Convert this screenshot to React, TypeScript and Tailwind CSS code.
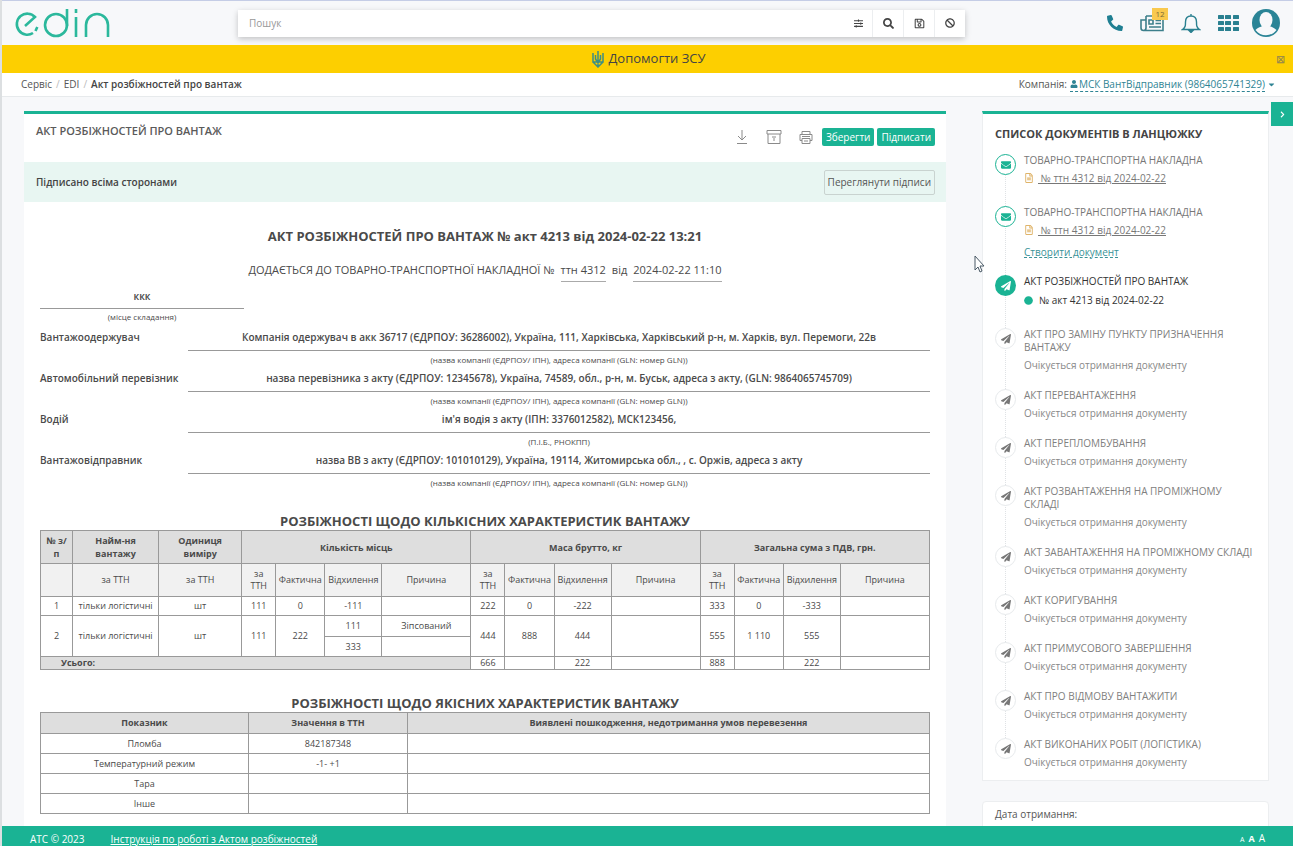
import { useState } from "react"
import type { ReactNode } from "react"
import {
  FaPaperPlane, FaEnvelope, FaPhone, FaSearch, FaRegSave, FaBan, FaSlidersH, FaUser, FaCaretDown,
  FaChevronRight, FaCircle, FaRegFileAlt,
} from "react-icons/fa"

const hint = "(назва компанії (ЄДРПОУ/ ІПН), адреса компанії (GLN: номер GLN))"

const parties = [
  { label: "Вантажоодержувач", value: "Компанія одержувач в акк 36717 (ЄДРПОУ: 36286002), Україна, 111, Харківська, Харківський р-н, м. Харків, вул. Перемоги, 22в", hint },
  { label: "Автомобільний перевізник", value: "назва перевізника з акту (ЄДРПОУ: 12345678), Україна, 74589, обл., р-н, м. Буськ, адреса з акту, (GLN: 9864065745709)", hint },
  { label: "Водій", value: "ім'я водія з акту (ІПН: 3376012582), МСК123456,", hint: "(П.І.Б., РНОКПП)" },
  { label: "Вантажовідправник", value: "назва ВВ з акту (ЄДРПОУ: 101010129), Україна, 19114, Житомирська обл., , с. Оржів, адреса з акту", hint },
]

const waiting = [
  "АКТ ПРО ЗАМІНУ ПУНКТУ ПРИЗНАЧЕННЯ ВАНТАЖУ",
  "АКТ ПЕРЕВАНТАЖЕННЯ",
  "АКТ ПЕРЕПЛОМБУВАННЯ",
  "АКТ РОЗВАНТАЖЕННЯ НА ПРОМІЖНОМУ СКЛАДІ",
  "АКТ ЗАВАНТАЖЕННЯ НА ПРОМІЖНОМУ СКЛАДІ",
  "АКТ КОРИГУВАННЯ",
  "АКТ ПРИМУСОВОГО ЗАВЕРШЕННЯ",
  "АКТ ПРО ВІДМОВУ ВАНТАЖИТИ",
  "АКТ ВИКОНАНИХ РОБІТ (ЛОГІСТИКА)",
]

function Logo() {
  return (
    <svg viewBox="0 0 96 32" className="h-8 w-24" fill="none" stroke="#2bb89c" strokeWidth="2.6" aria-label="edin">
      <path d="M11 19 21 10A10.500 10.500 0 1 0 19 26M21.500 24l1.800-4" />
      <circle cx="42" cy="18" r="11" />
      <path d="M53 2v17M62 2v4M62 10v20M72 30V18a11 11 0 0 1 22 0v12" />
    </svg>
  )
}

function Trident() {
  return (
    <svg viewBox="0 0 12 17" className="h-[17px] w-3" fill="none" stroke="#3c8f84" strokeWidth="1.500">
      <path d="M1 2v9h10V2M6 0v16M1 11l5 5 5-5M3.500 4v4l2.500 4 2.500-4V4" />
    </svg>
  )
}

function Header() {
  const [query, setQuery] = useState("")
  const tool = "flex h-[27px] w-[31px] items-center justify-center border-l border-[#eceef0]"

  return (
    <header className="flex h-[45px] shrink-0 items-center border-t border-[#c5cde6] bg-[#f7f8fa] pl-3 pr-3">
      <a href="#" className="w-56 shrink-0"><Logo /></a>
      <div className="flex h-[27px] w-[727px] items-center bg-white text-[#444] shadow-[0_2px_6px_rgba(0,0,0,0.22)]">
        <input
          aria-label="Пошук"
          placeholder="Пошук"
          value={query}
          onChange={(e) => setQuery(e.target.value)}
          className="h-full min-w-0 flex-1 px-[11px] text-[10px] outline-none placeholder:text-[#999]"
        />
        <button aria-label="Фільтри" className="flex h-[27px] w-[27px] items-center justify-center"><FaSlidersH size={9} /></button>
        <button aria-label="Шукати" className={tool}><FaSearch size={11} /></button>
        <button aria-label="Зберегти пошук" className={tool}><FaRegSave size={11} /></button>
        <button aria-label="Очистити" className={tool}><FaBan size={10} /></button>
      </div>
      <div className="ml-auto flex items-center text-[#1f7f92]">
        <button aria-label="Телефон"><FaPhone size={16} className="-scale-x-100" /></button>
        <button aria-label="Новини" className="relative ml-[17px]">
          <svg viewBox="0 0 26 20" className="h-5 w-[26px]" fill="none" stroke="#3c7f8b" strokeWidth="1.600">
            <path d="M6 3h17v14.500H3.500a2.500 2.500 0 0 1-2.500-2.500V7h5M6 3v12a2.500 2.500 0 0 1-2.500 2.500M9 7h4v4H9zM15.500 7.500H21M15.500 10.500H21M9 14h12" />
          </svg>
          <span className="absolute -right-0.5 -top-[5px] h-3 w-4 bg-[#f9c94e] text-center text-[8px] leading-3 text-[#7a6a3c]">12</span>
        </button>
        <button aria-label="Сповіщення" className="ml-[15px]">
          <svg viewBox="0 0 20 20" className="size-5" fill="none" stroke="#2a8090" strokeWidth="1.400">
            <path d="M10 1v2M1.500 16.500c3-2 3-4 3-7.500 0-4 2-6 5.500-6s5.500 2 5.500 6c0 3.500 0 5.500 3 7.500z" />
            <path d="M8 17.500h4l-2 2z" fill="#2a8090" />
          </svg>
        </button>
        <button aria-label="Сервіси" className="ml-[17px]">
          <svg viewBox="0 0 21 16" className="h-4 w-[21px]" fill="#2a8090">
            {[0, 6, 12].map((y) => [0, 7, 15].map((x) => <rect key={`${x}-${y}`} x={x} y={y} width="6" height="4" rx="0.5" />))}
          </svg>
        </button>
        <button aria-label="Профіль" className="ml-3">
          <svg viewBox="0 0 30 30" className="size-[30px]">
            <circle cx="15" cy="15" r="14" fill="#2a8496" />
            <path d="M4.500 22c3-3 5-3 7-4h7c2 1 4 1 7 4-5 7-16 7-21 0Z" fill="#f7f8fa" />
            <ellipse cx="15" cy="12" rx="6.500" ry="8" fill="#f7f8fa" />
          </svg>
        </button>
      </div>
    </header>
  )
}

function Toolbar() {
  const action = "h-[18px] rounded-xs bg-[#1ab394] px-1 text-[10px] leading-4 text-white"
  return (
    <div className="flex items-center pb-0.5 text-[#8a8a8a]">
      <button aria-label="Завантажити">
        <svg viewBox="0 0 12 16" className="h-4 w-3" fill="none" stroke="currentColor"><path d="M6 1v10M2 7l4 4 4-4M1 14.500h10" /></svg>
      </button>
      <button aria-label="Архівувати" className="ml-[18px]">
        <svg viewBox="0 0 16 16" className="size-4" fill="none" stroke="currentColor">
          <path d="M1 1.500h14v3.500H1zM2 5v9.500h12V5M6 8h4M8 9v3" />
        </svg>
      </button>
      <button aria-label="Друк" className="ml-[17px]">
        <svg viewBox="0 0 14 16" className="h-4 w-[14px]" fill="none" stroke="currentColor">
          <path d="M3 5.500V2.500h8v3M3 11.500H1v-6h12v6h-2M3 9.500h8v5H3zM3 7.500h8M5 12h4" />
        </svg>
      </button>
      <button className={`${action} ml-[9px]`}>Зберегти</button>
      <button className={`${action} ml-[3px]`}>Підписати</button>
    </div>
  )
}

function Th({ children, ...rest }: { children?: ReactNode; colSpan?: number }) {
  return <th className="h-[33px] border border-[#999] bg-[#dedede] px-1 text-[9px] font-bold leading-[13px]" {...rest}>{children}</th>
}

function Sub({ children }: { children?: ReactNode }) {
  return <td className="h-[33px] border border-[#999] bg-[#f1f1f1] text-[9px] leading-3">{children}</td>
}

function Td({ children, ...rest }: { children?: ReactNode; rowSpan?: number; colSpan?: number }) {
  return <td className="border border-[#999] text-[9px] leading-3" {...rest}>{children}</td>
}

function QuantityTable() {
  const group = [34, 49, 57, 89]
  const cols = [32, 86, 83, ...group, ...group, ...group]
  const sub = [<>за<br />ТТН</>, "Фактична", "Відхилення", "Причина"]

  return (
    <table className="w-full table-fixed border-collapse text-center">
      <colgroup>
        {cols.map((w, i) => <col key={i} style={{ width: `${(w / 888) * 100}%` }} />)}
      </colgroup>
      <thead>
        <tr>
          <Th>№ з/<br />п</Th>
          <Th>Найм-ня<br />вантажу</Th>
          <Th>Одиниця<br />виміру</Th>
          <Th colSpan={4}>Кількість місць</Th>
          <Th colSpan={4}>Маса брутто, кг</Th>
          <Th colSpan={4}>Загальна сума з ПДВ, грн.</Th>
        </tr>
      </thead>
      <tbody>
        <tr>
          <Sub /><Sub>за ТТН</Sub><Sub>за ТТН</Sub>
          {[...sub, ...sub, ...sub].map((s, i) => <Sub key={i}>{s}</Sub>)}
        </tr>
        <tr className="h-[19px]">
          <Td>1</Td><Td>тільки логістичні</Td><Td>шт</Td>
          <Td>111</Td><Td>0</Td><Td>-111</Td><Td />
          <Td>222</Td><Td>0</Td><Td>-222</Td><Td />
          <Td>333</Td><Td>0</Td><Td>-333</Td><Td />
        </tr>
        <tr className="h-[21px]">
          <Td rowSpan={2}>2</Td><Td rowSpan={2}>тільки логістичні</Td><Td rowSpan={2}>шт</Td>
          <Td rowSpan={2}>111</Td><Td rowSpan={2}>222</Td><Td>111</Td><Td>Зіпсований</Td>
          <Td rowSpan={2}>444</Td><Td rowSpan={2}>888</Td><Td rowSpan={2}>444</Td><Td rowSpan={2} />
          <Td rowSpan={2}>555</Td><Td rowSpan={2}>1 110</Td><Td rowSpan={2}>555</Td><Td rowSpan={2} />
        </tr>
        <tr className="h-5"><Td>333</Td><Td /></tr>
        <tr>
          <th colSpan={7} className="border border-[#999] bg-[#dedede] pl-5 text-left text-[9px] font-bold leading-3">Усього:</th>
          <Td>666</Td><Td /><Td>222</Td><Td />
          <Td>888</Td><Td /><Td>222</Td><Td />
        </tr>
      </tbody>
    </table>
  )
}

function QualityTable() {
  const rows = [["Пломба", "842187348"], ["Температурний режим", "-1- +1"], ["Тара", ""], ["Інше", ""]]
  return (
    <table className="w-full table-fixed border-collapse text-center text-[9px] leading-3">
      <thead>
        <tr className="h-[21px] bg-[#dedede]">
          <th className="w-[208px] border border-[#999]">Показник</th>
          <th className="w-[159px] border border-[#999]">Значення в ТТН</th>
          <th className="border border-[#999]">Виявлені пошкодження, недотримання умов перевезення</th>
        </tr>
      </thead>
      <tbody>
        {rows.map(([name, value]) => (
          <tr key={name} className="h-5"><Td>{name}</Td><Td>{value}</Td><Td /></tr>
        ))}
      </tbody>
    </table>
  )
}

function Document() {
  return (
    <main className="min-w-0 flex-1 self-stretch border-t-[3px] border-[#1ab394] bg-white">
      <div className="flex h-12 justify-between pl-3 pr-[11px]">
        <h1 className="pt-[9px] text-[11px] font-semibold leading-4 text-[#5a5a5a]">АКТ РОЗБІЖНОСТЕЙ ПРО ВАНТАЖ</h1>
        <Toolbar />
      </div>
      <div className="flex h-10 items-center justify-between bg-[#e8f6f2] pl-3 pr-[11px]">
        <strong className="text-[10px] font-semibold text-[#444]">Підписано всіма сторонами</strong>
        <button className="h-[25px] rounded-xs border border-[#c9d3d0] px-[3px] text-[10px]">Переглянути підписи</button>
      </div>

      <article className="px-4 text-[#4a4a4a]">
        <h2 className="pt-[25px] text-center text-[13px] font-bold leading-[18px]">АКТ РОЗБІЖНОСТЕЙ ПРО ВАНТАЖ № акт 4213 від 2024-02-22 13:21</h2>
        <p className="mt-4 flex h-[19px] items-center justify-center gap-[6px] text-[11px]">
          ДОДАЄТЬСЯ ДО ТОВАРНО-ТРАНСПОРТНОЇ НАКЛАДНОЇ №
          <span className="border-b border-[#aaa] leading-[22px]">ттн 4312</span>
          від
          <span className="border-b border-[#aaa] leading-[22px]">2024-02-22 11:10</span>
        </p>
        <div className="mt-2 w-[204px] text-center">
          <div className="h-[21px] border-b border-[#999] text-[10px] font-semibold leading-4">ккк</div>
          <div className="pt-px text-[8px] leading-[14px]">(місце складання)</div>
        </div>
        <dl className="pt-1">
          {parties.map((p) => (
            <div key={p.label} className="flex h-[41px] leading-4">
              <dt className="w-[148px] shrink-0 pt-px text-[10px] font-semibold">{p.label}</dt>
              <dd className="flex-1 text-center">
                <div className="h-[23px] border-b border-[#999] pt-px text-[10px] font-semibold">{p.value}</div>
                <div className="pt-px text-[8px]">{p.hint}</div>
              </dd>
            </div>
          ))}
        </dl>
        <h3 className="mt-5 text-center text-[13px] font-bold leading-[18px]">РОЗБІЖНОСТІ ЩОДО КІЛЬКІСНИХ ХАРАКТЕРИСТИК ВАНТАЖУ</h3>
        <QuantityTable />
        <h3 className="mt-6 text-center text-[13px] font-bold leading-[18px]">РОЗБІЖНОСТІ ЩОДО ЯКІСНИХ ХАРАКТЕРИСТИК ВАНТАЖУ</h3>
        <QualityTable />
      </article>
    </main>
  )
}

type StepProps = { kind: "sent" | "current" | "waiting"; title: string; className?: string; children: ReactNode }

function Step({ kind, title, className = "pb-5", children }: StepProps) {
  const badge = {
    sent: "border border-[#1ab394] bg-white text-[#1ab394]",
    current: "bg-[#1ab394] text-white",
    waiting: "border border-[#e7eaec] bg-white text-[#777]",
  }[kind]
  const heading = {
    sent: "text-[#777]",
    current: "font-medium text-[#333]",
    waiting: "font-medium text-[#808080]",
  }[kind]

  return (
    <li className={`group relative flex gap-2 ${className}`}>
      <span className="absolute inset-y-0 left-[10px] border-l border-dotted border-[#dfe2e5] group-last:hidden" />
      <span className={`relative flex size-[21px] shrink-0 items-center justify-center rounded-full ${badge}`}>
        {kind === "sent" ? <FaEnvelope size={10} /> : <FaPaperPlane size={10} />}
      </span>
      <div className="min-w-0 text-[10px]">
        <h4 className={`leading-[13px] ${heading}`}>{title}</h4>
        {children}
      </div>
    </li>
  )
}

function TtnLink() {
  return (
    <div className="mt-[3px] flex items-center gap-1 leading-4 text-[#777]">
      <FaRegFileAlt size={10} className="text-[#dfb46a]" />
      <a href="#" className="underline">&nbsp;№ ттн 4312 від 2024-02-22</a>
    </div>
  )
}

function Sidebar() {
  return (
    <aside className="mr-6 w-[287px] shrink-0">
      <section className="border border-t-[3px] border-[#eceef0] border-t-[#1ab394] bg-white px-3 pb-[10px] pt-3">
        <h2 className="text-[11px] font-bold leading-4 text-[#444]">СПИСОК ДОКУМЕНТІВ В ЛАНЦЮЖКУ</h2>
        <ol className="mt-3">
          <Step kind="sent" title="ТОВАРНО-ТРАНСПОРТНА НАКЛАДНА"><TtnLink /></Step>
          <Step kind="sent" title="ТОВАРНО-ТРАНСПОРТНА НАКЛАДНА" className="pb-[15px]">
            <TtnLink />
            <a href="#" className="mt-[6px] block leading-4 text-[#3a9297] underline decoration-dashed">Створити документ</a>
          </Step>
          <Step kind="current" title="АКТ РОЗБІЖНОСТЕЙ ПРО ВАНТАЖ">
            <div className="mt-1 flex items-center gap-[6px] font-medium leading-4 text-[#333]">
              <FaCircle size={9} className="text-[#1ab394]" />№ акт 4213 від 2024-02-22
            </div>
          </Step>
          {waiting.map((title) => (
            <Step key={title} kind="waiting" title={title} className="pb-4 last:pb-0">
              <p className="mt-[3px] leading-4 text-[#888]">Очікується отримання документу</p>
            </Step>
          ))}
        </ol>
      </section>
      <section className="mt-5 rounded-t border border-[#eceef0] bg-white px-3 py-1">
        <h3 className="text-[10px] leading-4">Дата отримання:</h3>
      </section>
    </aside>
  )
}

export default function App() {
  return (
    <div className="flex h-screen flex-col overflow-hidden border-l-2 border-[#dcdfe1] bg-[#f7f8fa] font-['Open_Sans','Noto_Sans',sans-serif] text-[#555] [&_input]:font-[inherit]">
      <Header />
      <div className="flex h-7 shrink-0 items-center bg-[#fdcf00] text-[13px] text-[#444]">
        <a href="#" className="mx-auto flex items-center gap-1 pl-5"><Trident />Допомогти ЗСУ</a>
        <button aria-label="Закрити" className="mr-2 text-[11px] leading-3 text-[#8f8450]">⊠</button>
      </div>
      <nav className="flex h-6 shrink-0 items-center justify-between border-b border-[#e7eaec] bg-white pl-[19px] pr-[17px] text-[10px]">
        <div className="flex gap-1">
          <a href="#">Сервіс</a><span className="text-[#bbb]">/</span>
          <a href="#">EDI</a><span className="text-[#bbb]">/</span>
          <strong className="font-semibold text-[#444]">Акт розбіжностей про вантаж</strong>
        </div>
        <div className="flex items-center gap-[3px]">
          Компанія:
          <button className="flex items-center text-[#2f8494]">
            <span className="flex items-center border-b border-dashed border-[#2f8494] leading-[14px]"><FaUser size={8} className="mr-px" />МСК ВантВідправник (9864065741329)</span>
            <FaCaretDown size={9} className="ml-[2px]" />
          </button>
        </div>
      </nav>

      <div className="relative flex min-h-0 flex-1 items-start gap-9 overflow-hidden pl-[22px] pt-[14px]">
        <Document />
        <Sidebar />
        <button aria-label="Згорнути список" className="absolute right-0 top-[5px] flex h-6 w-[22px] items-center justify-center bg-[#1ab394] text-white"><FaChevronRight size={7} /></button>
        <svg viewBox="0 0 12 18" className="pointer-events-none absolute left-[972px] top-[158px] h-[18px] w-3"><path d="M1 1v14l3-3 2 5 2-1-2-5h4z" fill="#fff" stroke="#4a5a66" /></svg>
      </div>

      <footer className="flex h-5 shrink-0 items-center bg-[#1ab394] px-7 pt-[5px] text-[10px] leading-3 text-white">
        <span>АТС © 2023</span>
        <a href="#" className="ml-[26px] underline">Інструкція по роботі з Актом розбіжностей</a>
        <div className="ml-auto flex items-baseline gap-1">
          <button aria-label="Малий шрифт" className="text-[7px]">A</button>
          <button aria-label="Середній шрифт" className="text-[9px] font-bold">A</button>
          <button aria-label="Великий шрифт" className="text-[10px]">A</button>
        </div>
      </footer>
    </div>
  )
}
